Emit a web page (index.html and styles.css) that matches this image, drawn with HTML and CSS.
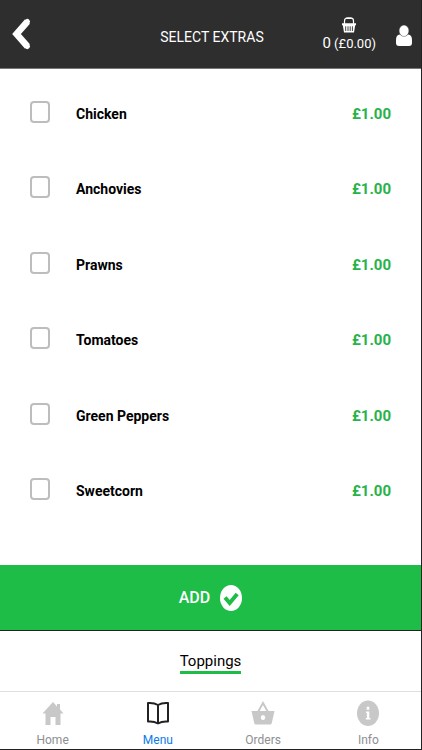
FILE: index.html
```html
<!DOCTYPE html>
<html lang="en">
<head>
<meta charset="utf-8">
<meta name="viewport" content="width=device-width, initial-scale=1">
<title>Select Extras</title>
<link rel="stylesheet" href="styles.css">
</head>
<body>
<div class="app">
  <header class="header">
    <button class="back" type="button" aria-label="Back">
      <svg width="20" height="34" viewBox="0 0 20 34"><path d="M15.500 4.500L4.500 17L15.500 29.500" fill="none" stroke="#fff" stroke-width="6.500" stroke-linejoin="miter"/><path d="M15.500 4.500L14 6.200M15.500 29.500L14 27.800" stroke="#fff" stroke-width="5" stroke-linecap="round"/></svg>
    </button>
    <h1 class="title">SELECT EXTRAS</h1>
    <div class="account">
      <a class="basket" href="#basket">
        <svg width="16" height="16" viewBox="0 0 16 16"><path d="M3.500 7V4Q3.500 1.200 6 1.200H10Q12.500 1.200 12.500 4V7" fill="none" stroke="#fff" stroke-width="1.200"/><path d="M5.500.5H10.500V2H5.500zM1 6.200H15V8.200H1zM1.800 8H14.200L13 15.500H3z" fill="#fff"/><path d="M4.700 9.300V14M7 9.300V14M9.200 9.300V14M11.400 9.300V14" stroke="#2e2e2e" stroke-width=".9"/></svg>
        <span class="basket-total"><span class="count">0</span> (£0.00)</span>
      </a>
      <a class="user" href="#account" aria-label="Account">
        <svg width="16" height="22" viewBox="0 0 16 22"><path d="M3.800 9.500Q0 9.700 0 15V18Q0 21 3 21H13Q16 21 16 18V15Q16 9.700 12.200 9.500Q8 12.500 3.800 9.500z" fill="#fff"/><ellipse cx="8" cy="5.800" rx="4.900" ry="5.700" fill="#fff" stroke="#2e2e2e" stroke-width=".4"/></svg>
      </a>
    </div>
  </header>

  <main class="extras">
    <label class="extra"><input class="tick" type="checkbox"><span class="name">Chicken</span><span class="price">£1.00</span></label>
    <label class="extra"><input class="tick" type="checkbox"><span class="name">Anchovies</span><span class="price">£1.00</span></label>
    <label class="extra"><input class="tick" type="checkbox"><span class="name">Prawns</span><span class="price">£1.00</span></label>
    <label class="extra"><input class="tick" type="checkbox"><span class="name">Tomatoes</span><span class="price">£1.00</span></label>
    <label class="extra"><input class="tick" type="checkbox"><span class="name">Green Peppers</span><span class="price">£1.00</span></label>
    <label class="extra"><input class="tick" type="checkbox"><span class="name">Sweetcorn</span><span class="price">£1.00</span></label>
  </main>

  <button class="add" type="button">
    <span>ADD</span>
    <svg width="22" height="26" viewBox="0 0 22 26"><ellipse cx="11" cy="13" rx="11" ry="13" fill="#fff"/><path d="M5 12.500L9.700 18L17.200 9" fill="none" stroke="#1dbd47" stroke-width="4"/></svg>
  </button>

  <div class="sections"><a class="section" href="#toppings">Toppings</a></div>

  <nav class="tabs">
    <a class="tab" href="#home">
      <svg width="24" height="28" viewBox="0 0 24 28"><path d="M12 3L1.500 14.500H4.500V26H9.500V18H14.500V26H19.500V14.500H22.500L19 10.500V5H16V7.400z" fill="#c8c8c8"/></svg>
      <span>Home</span>
    </a>
    <a class="tab active" href="#menu">
      <svg width="24" height="28" viewBox="0 0 24 28"><path d="M12 6Q8 3.500 2 4V22.500Q8 22 12 24.500Q16 22 22 22.500V4Q16 3.500 12 6zM12 6V24.500" fill="none" stroke="#222" stroke-width="2" stroke-linejoin="round"/></svg>
      <span>Menu</span>
    </a>
    <a class="tab" href="#orders">
      <svg width="24" height="28" viewBox="0 0 24 28"><path d="M7 13L12 4L17 13" fill="none" stroke="#c8c8c8" stroke-width="2"/><path d="M.5 12H23.500L20.800 24Q20.400 25.500 19 25.500H5Q3.600 25.500 3.200 24z" fill="#c8c8c8"/><ellipse cx="12" cy="18.500" rx="2.200" ry="2.600" fill="#fff"/></svg>
      <span>Orders</span>
    </a>
    <a class="tab" href="#info">
      <svg width="24" height="28" viewBox="0 0 24 28"><ellipse cx="12" cy="14.200" rx="11" ry="12.700" fill="#c8c8c8"/><path d="M10.700 7.700H13.300V10.700H10.700zM10 12.500H13.300V19H14.500V20.500H9.800V19H10.900V14H10z" fill="#fff"/></svg>
      <span>Info</span>
    </a>
  </nav>
</div>
</body>
</html>
```
FILE: styles.css
```css
* {
  box-sizing: border-box;
}

body {
  margin: 0;
  font-family: Roboto, "Liberation Sans", sans-serif;
  color: #000;
  background: #fff;
}

a {
  color: inherit;
  text-decoration: none;
}

svg {
  display: block;
}

button {
  border: 0;
  font: inherit;
  cursor: pointer;
}

.app {
  display: flex;
  flex-direction: column;
  min-height: 100vh;
  border-right: 1px solid #222;
  border-bottom: 1px solid #222;
}

.header {
  display: grid;
  grid-template-columns: 1fr auto 1fr;
  align-items: center;
  height: 69px;
  padding: 0 9px 0 12px;
  background: #2e2e2e;
  border-bottom: 1px solid #777;
  color: #fff;
}

.back {
  justify-self: start;
  padding: 0;
  background: none;
}

.title {
  margin: 0;
  padding-top: 6px;
  font-size: 14px;
  font-weight: 400;
  line-height: 20px;
}

.account {
  display: flex;
  align-items: center;
  justify-content: flex-end;
  gap: 20px;
  padding-top: 3px;
}

.basket {
  display: flex;
  flex-direction: column;
  align-items: center;
}

.basket-total {
  font-size: 13px;
  line-height: 20px;
  white-space: nowrap;
}

.count {
  font-size: 15px;
}

.extras {
  display: flex;
  flex: 1;
  flex-direction: column;
  padding: 6px 30px 37px;
}

.extra {
  display: flex;
  flex: 1;
  align-items: center;
  font-size: 14px;
  font-weight: 700;
  line-height: 20px;
}

.tick {
  appearance: none;
  width: 20px;
  height: 22px;
  margin: 0 26px 2px 0;
  border: 2px solid #bdbdbd;
  border-radius: 4px;
  background: #fff;
}

.tick:checked {
  border-color: #1dbd47;
  background: #1dbd47;
}

.name,
.price {
  padding-top: 2px;
}

.name {
  flex: 1;
}

.price {
  color: #27b24a;
  font-size: 15px;
}

.add {
  display: flex;
  align-items: center;
  justify-content: center;
  gap: 10px;
  height: 66px;
  padding: 0;
  background: #1dbd47;
  border-bottom: 1px solid #222;
  color: #fff;
  font-size: 16px;
  font-weight: 500;
}

.sections {
  display: flex;
  justify-content: center;
  height: 60px;
  padding-top: 20px;
  font-size: 15px;
  line-height: 20px;
}

.section {
  height: 23px;
  border-bottom: 3px solid #1dbd47;
}

.tabs {
  display: grid;
  grid-template-columns: repeat(4, 1fr);
  height: 58px;
  border-top: 1px solid #dedede;
  color: #8e8e93;
  font-size: 12px;
  line-height: 16px;
}

.tab {
  display: flex;
  flex-direction: column;
  align-items: center;
  gap: 5px;
  padding-top: 7px;
}

.tab.active {
  color: #0a7be8;
}
```
